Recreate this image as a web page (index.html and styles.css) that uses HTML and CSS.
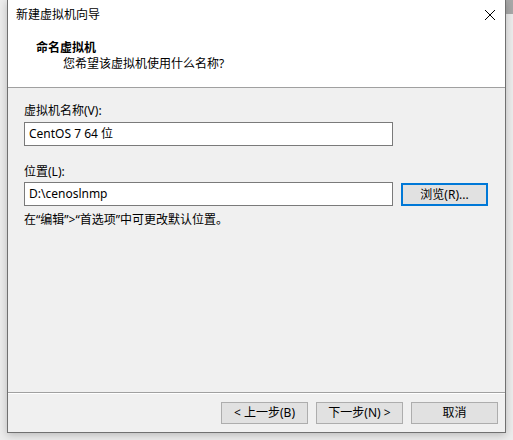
FILE: index.html
```html
<!DOCTYPE html>
<html lang="zh-CN">
<head>
<meta charset="utf-8">
<title>新建虚拟机向导</title>
<link rel="stylesheet" href="styles.css">
</head>
<body>
<div class="window">
  <div class="titlebar">
    <span class="title">新建虚拟机向导</span>
    <svg class="close" width="12" height="12" viewBox="0 0 12 12"><path d="M1 1L11 11M11 1L1 11" stroke="#000" stroke-width="1" fill="none"/></svg>
  </div>
  <div class="header">
    <div class="h-title">命名虚拟机</div>
    <div class="h-sub">您希望该虚拟机使用什么名称?</div>
  </div>
  <div class="content">
    <div class="label">虚拟机名称(V):</div>
    <div class="row">
      <div class="input">CentOS 7 64 位</div>
    </div>
    <div class="label label2">位置(L):</div>
    <div class="row">
      <div class="input">D:\cenoslnmp</div>
      <div class="btn btn-focus">浏览(R)...</div>
    </div>
    <div class="hint">在“编辑”&gt;“首选项”中可更改默认位置。</div>
  </div>
  <div class="footer">
    <div class="btn">&lt; 上一步(B)</div>
    <div class="btn">下一步(N) &gt;</div>
    <div class="btn">取消</div>
  </div>
</div>
</body>
</html>
```
FILE: styles.css
```css
html, body {
  margin: 0;
  padding: 0;
}
body {
  width: 513px;
  height: 440px;
  overflow: hidden;
  background: linear-gradient(#a8a8a8, #a8a8a8) no-repeat right top / 7px 14px, #ececec;
  font-family: "Noto Sans", "Noto Sans CJK SC", sans-serif;
  font-size: 12px;
  line-height: 16px;
  color: #000;
}
.window {
  margin-left: 7px;
  width: 497px;
  height: 432px;
  border: 1px solid #707070;
  border-top: none;
  background: #f0f0f0;
  display: flex;
  flex-direction: column;
  box-shadow: 0 2px 8px rgba(0,0,0,0.22);
}
.titlebar {
  height: 30px;
  background: #fff;
  display: flex;
  align-items: center;
  justify-content: space-between;
  padding: 0 9px 0 8px;
}
.close {
  margin-top: -1px;
}
.header {
  height: 47px;
  background: #fff;
  border-bottom: 1px solid #a0a0a0;
  padding: 10px 0 0 28px;
}
.h-title {
  font-weight: bold;
}
.h-sub {
  padding-left: 27px;
}
.content {
  flex: 1;
  padding: 15px 0 0 16px;
  display: flex;
  flex-direction: column;
}
.label {
  margin-bottom: 3px;
}
.label2 {
  margin-top: 18px;
  margin-bottom: 2px;
}
.row {
  display: flex;
  align-items: center;
  gap: 8px;
}
.input {
  width: 358px;
  height: 22px;
  line-height: 22px;
  border: 1px solid #7a7a7a;
  background: #fff;
  padding-left: 4px;
  padding-right: 5px;
}
.btn {
  width: 85px;
  height: 20px;
  line-height: 20px;
  border: 1px solid #adadad;
  background: #e1e1e1;
  text-align: center;
}
.btn-focus {
  width: 83px;
  height: 19px;
  line-height: 19px;
  border: 2px solid #0078d7;
}
.hint {
  margin-top: 6px;
}
.footer {
  height: 30px;
  border-top: 1px solid #a0a0a0;
  box-shadow: inset 0 1px 0 #fff;
  padding: 9px 7px 0 0;
  display: flex;
  justify-content: flex-end;
  gap: 8px;
}
```
